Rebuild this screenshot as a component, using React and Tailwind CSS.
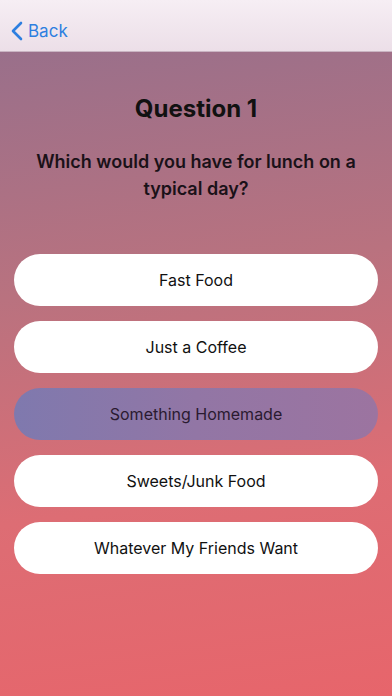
import React from 'react'

const options = [
    { label: 'Fast Food' },
    { label: 'Just a Coffee' },
    { label: 'Something Homemade', selected: true },
    { label: 'Sweets/Junk Food' },
    { label: 'Whatever My Friends Want' },
]

const App = () => {
    return (
        <div
            className="w-[392px] h-[696px] flex flex-col overflow-hidden bg-[linear-gradient(172deg,#936f8d_0%,#b9727f_40%,#dd6d74_70%,#e7656b_100%)]"
            style={{ fontFamily: 'Inter, "Liberation Sans", sans-serif' }}
        >
            <div className="h-[52px] shrink-0 flex items-end pb-[10px] pl-[11px] bg-[linear-gradient(180deg,#f6eef4,#ecdfe8)] border-b border-[#c9b4c2]">
                <div className="flex items-center gap-[5px] text-[#2d7fe0]">
                    <svg width="12" height="20" viewBox="0 0 12 20" fill="none">
                        <path d="M10 2L2 10L10 18" stroke="currentColor" strokeWidth="2.6" strokeLinecap="round" strokeLinejoin="round" />
                    </svg>
                    <span className="text-[17px] leading-none">Back</span>
                </div>
            </div>

            <div className="flex flex-col items-center pt-[45px] px-[30px]">
                <h1 className="text-[24px] font-bold text-[#111] leading-none">Question 1</h1>
                <p className="mt-[27px] text-[18px] font-semibold text-[#1a1118] text-center leading-[27px]">
                    Which would you have for lunch on a typical day?
                </p>
            </div>

            <div className="flex flex-col gap-[15px] px-[14px] mt-[52px]">
                {options.map((o) => (
                    <div
                        key={o.label}
                        className={
                            o.selected
                                ? 'h-[52px] rounded-full flex items-center justify-center text-[16px] text-[#2a1a30] bg-[linear-gradient(90deg,#7f79ae,#9276a5_50%,#9c74a0)]'
                                : 'h-[52px] rounded-full flex items-center justify-center text-[16px] text-[#111] bg-white'
                        }
                    >
                        {o.label}
                    </div>
                ))}
            </div>
        </div>
    )
}

export default App
